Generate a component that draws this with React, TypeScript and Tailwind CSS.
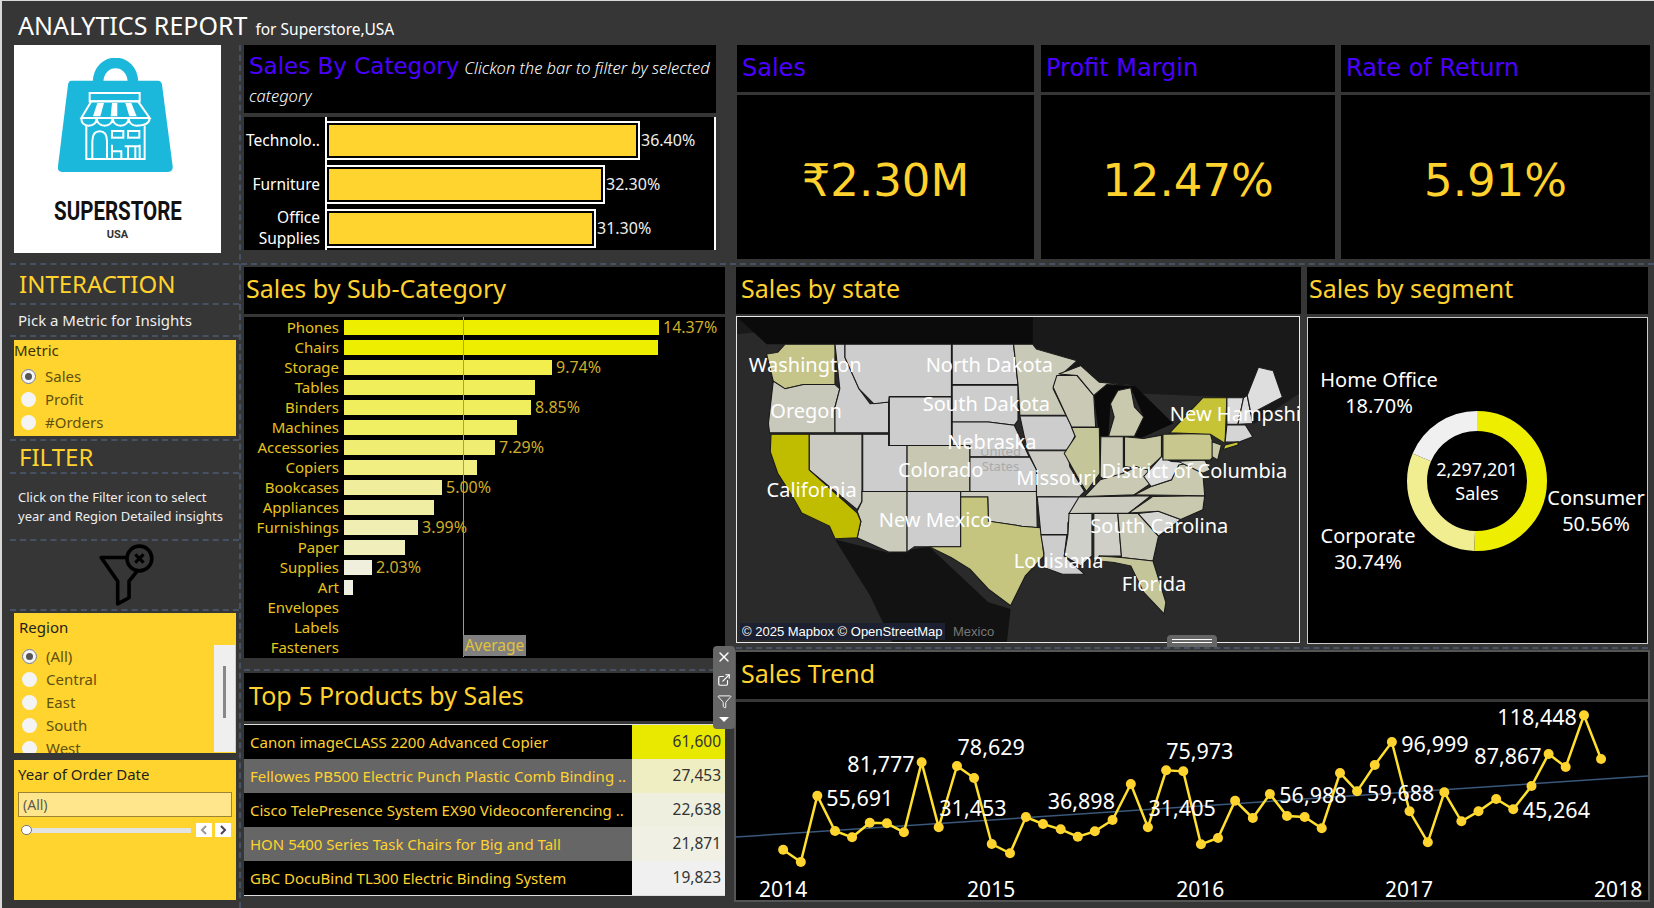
import { X, ExternalLink, Filter } from "lucide-react";

const subCategories = [
  { name: "Phones", width: 315, color: "#eeee00", value: "14.37%" },
  { name: "Chairs", width: 314, color: "#eeee00" },
  { name: "Storage", width: 208, color: "#f1ee4e", value: "9.74%" },
  { name: "Tables", width: 191, color: "#f0ee5a" },
  { name: "Binders", width: 187, color: "#f0ee5c", value: "8.85%" },
  { name: "Machines", width: 173, color: "#f0ee62" },
  { name: "Accessories", width: 151, color: "#f0ee72", value: "7.29%" },
  { name: "Copiers", width: 133, color: "#f1ee82" },
  { name: "Bookcases", width: 98, color: "#f0ee9c", value: "5.00%" },
  { name: "Appliances", width: 90, color: "#f0eea2" },
  { name: "Furnishings", width: 74, color: "#f0eeb2", value: "3.99%" },
  { name: "Paper", width: 61, color: "#f0eeba" },
  { name: "Supplies", width: 28, color: "#f0eedc", value: "2.03%" },
  { name: "Art", width: 9, color: "#f0f0e2" },
  { name: "Envelopes", width: 0, color: "" },
  { name: "Labels", width: 0, color: "" },
  { name: "Fasteners", width: 0, color: "" },
];

const products = [
  { name: "Canon imageCLASS 2200 Advanced Copier", value: "61,600", color: "#e9e900" },
  { name: "Fellowes PB500 Electric Punch Plastic Comb Binding ..", value: "27,453", color: "#efeec2" },
  { name: "Cisco TelePresence System EX90 Videoconferencing ..", value: "22,638", color: "#efefdf" },
  { name: "HON 5400 Series Task Chairs for Big and Tall", value: "21,871", color: "#f0f0e4" },
  { name: "GBC DocuBind TL300 Electric Binding System", value: "19,823", color: "#f0f0f0" },
];

const trend = [
  [90, 628], [120, 665], [148, 466], [178, 572], [207, 591], [237, 547], [266, 549], [295, 576],
  [325, 366], [354, 561], [385, 377], [414, 413], [444, 611], [475, 639], [502, 530], [531, 551],
  [561, 567], [590, 589], [619, 573], [649, 539], [680, 431], [709, 561], [740, 390], [769, 393],
  [799, 612], [828, 593], [857, 481], [887, 533], [916, 461], [945, 527], [975, 530], [1004, 564],
  [1035, 398], [1064, 453], [1094, 374], [1123, 305], [1153, 513], [1184, 606], [1212, 456], [1241, 543],
  [1270, 513], [1300, 476], [1329, 507], [1360, 437], [1389, 341], [1418, 380], [1449, 225], [1478, 356],
].map(([x, y]) => [(x - 10) / 1.697, (y - 185) / 3]);

const trendLabels = [
  ["55,691", 163, 472], ["81,777", 199, 371], ["78,629", 386, 320], ["31,453", 355, 502],
  ["36,898", 539, 481], ["75,973", 740, 332], ["31,405", 710, 502], ["56,988", 932, 464],
  ["59,688", 1081, 458], ["96,999", 1139, 311], ["87,867", 1263, 346], ["45,264", 1345, 510],
  ["118,448", 1302, 229],
] as [string, number, number][];

const years = [["2014", 90], ["2015", 443], ["2016", 798], ["2017", 1152], ["2018", 1507]] as [string, number][];

// state outlines, traced in the zoomed map's coordinates
const grey = "#cdcdcd";
const states: [string, string][] = [
  ["150,100 285,100 285,222 200,222 150,235 118,212 100,130 130,125", "#c5c58a"],
  ["118,212 150,235 200,222 285,222 298,235 285,290 285,368 108,368 105,340", "#c9c9bb"],
  ["215,372 358,372 358,575 345,600 215,480", "#cbcbc4"],
  ["285,100 312,100 312,140 350,235 380,280 430,275 430,368 285,368 285,290 298,235", grey],
  ["312,100 600,100 600,258 432,258 430,275 390,280 350,235 312,140", grey],
  ["432,260 600,260 600,406 432,406", grey],
  ["360,372 430,372 430,406 480,406 480,545 360,545", grey],
  ["480,406 650,406 650,545 480,545", "#c8c8b2"],
  ["358,545 480,545 480,728 430,728 345,685 355,635 345,605 358,575", "#cbcbbc"],
  ["480,545 625,545 625,712 500,712 480,728", grey],
  ["602,100 768,100 780,222 602,222", grey],
  ["602,224 780,224 780,330 770,345 700,335 602,335", grey],
  ["602,335 700,335 770,345 810,440 650,440 650,406 602,406", grey],
  ["650,442 812,442 830,480 830,545 650,545", grey],
  ["625,545 830,545 832,655 790,650 700,635 698,562 625,562", "#cbcbc0"],
  ["625,562 698,562 700,635 790,650 842,655 850,740 800,800 760,890 700,840 650,780 600,745 540,712 625,712", "#c5c57f"],
  ["768,100 820,100 830,115 940,150 885,205 875,235 910,315 785,315 780,222", "#c9c9b8"],
  ["785,317 912,317 935,375 915,420 805,420", grey],
  ["805,422 915,422 920,470 960,545 945,562 830,560 830,480", "#cbcbc4"],
  ["832,562 950,562 915,640 915,675 842,675", grey],
  ["842,677 912,677 905,740 960,795 900,795 850,775 850,730", "#cdcdcd"],
  ["875,230 885,195 940,195 985,255 990,350 925,350 910,315", "#c9c9b6"],
  ["925,352 1000,352 1002,490 965,545 945,510 905,430 935,380", "#c5c59a"],
  ["890,190 950,165 1000,215 1095,225 1020,222 985,255 940,195", "#c9c9b6"],
  ["1050,240 1085,232 1095,290 1120,320 1095,378 1025,378 1040,320 1030,280", "#c9c9ae"],
  ["1004,380 1065,380 1065,490 1020,515 1002,500", "#c9c9b6"],
  ["1068,380 1120,385 1168,375 1168,440 1130,480 1068,470", "#c8c8a4"],
  ["960,560 1002,510 1065,490 1100,470 1130,480 1140,520 1095,555", "#c9c9b4"],
  ["945,562 1140,558 1080,610 918,612", "#cbcbbf"],
  ["918,612 980,612 980,740 950,770 905,740 915,675", "#d0d0cb"],
  ["985,612 1050,612 1060,740 1000,740 985,770", "#cfcfc8"],
  ["1050,612 1105,612 1160,680 1145,755 1060,745", "#c9c9b8"],
  ["1000,740 1060,745 1145,755 1180,880 1175,915 1120,850 1085,770 1040,760 1000,755", "#c5c59a"],
  ["1105,612 1160,605 1220,630 1160,680", "#d4d4d0"],
  ["1080,610 1145,560 1285,558 1280,600 1220,630 1160,605", "#c9c9b0"],
  ["1095,555 1140,530 1195,510 1215,455 1280,490 1285,558", "#c9c9b0"],
  ["1120,500 1168,440 1195,455 1250,458 1215,465 1195,510 1140,530", "#dcdcdc"],
  ["1195,455 1285,450 1300,480 1280,490 1215,455", "#d2d2c2"],
  ["1172,372 1300,370 1315,430 1300,450 1172,450", "#c8c88e"],
  ["1305,395 1330,405 1320,450 1305,440", "#c9c9a8"],
  ["1190,368 1280,262 1345,262 1340,400 1300,372", "#c7c336"],
  ["1345,262 1390,262 1375,342 1345,342", "#dcdcdc"],
  ["1390,262 1400,255 1415,340 1375,342", "#dcdcdc"],
  ["1400,255 1430,170 1470,180 1495,260 1410,310", "#dedede"],
  ["1345,344 1395,344 1415,380 1380,395 1340,396", "#d5d5d5"],
  ["1340,405 1375,395 1375,405 1335,418", "#c7c336"],
  ["112,372 215,372 215,480 345,610 355,635 345,685 285,688 270,650 195,610 170,560 130,490 110,425", "#c0bc00"],
];

const mapLabels: [string, number, number][] = [
  ["Washington", 52, 162], ["North Dakota", 530, 162], ["South Dakota", 522, 280], ["Oregon", 110, 300],
  ["New Hampshi", 1190, 310], ["Nebraska", 588, 392], ["Colorado", 455, 478], ["Missouri", 775, 500],
  ["District of Columbia", 1005, 480], ["California", 100, 538], ["New Mexico", 403, 628],
  ["South Carolina", 975, 645], ["Louisiana", 768, 750], ["Florida", 1060, 820],
];

function Dash({ className = "" }: { className?: string }) {
  return <div className={"border-t-2 border-dashed border-[#465264] " + className} />;
}

function Radio({ label, checked }: { label: string; checked?: boolean }) {
  return (
    <div className="flex h-[23px] items-center gap-[9px] text-[15px] text-[#5f5012]">
      <span className="flex h-[15px] w-[15px] items-center justify-center rounded-full bg-[#f4f4f4]">
        {checked && (
          <span className="flex h-[15px] w-[15px] items-center justify-center rounded-full border border-[#777]">
            <span className="h-[7px] w-[7px] rounded-full bg-[#555]" />
          </span>
        )}
      </span>
      {label}
    </div>
  );
}

function Logo() {
  return (
    <div className="ml-3 flex h-[208px] w-[207px] flex-col items-center bg-white pt-[13px]">
      <svg width="160" height="115" viewBox="0 25 480 345">
        <path d="M180 100 C180 20 285 20 285 100" fill="none" stroke="#1bb8dc" strokeWidth="32" />
        <path d="M100 93 H360 Q370 93 372 105 L404 350 Q405 367 390 367 H72 Q58 367 60 350 L90 105 Q92 93 100 93Z" fill="#1bb8dc" />
        <g fill="none" stroke="#fff" strokeWidth="6">
          <rect x="155" y="130" width="150" height="25" />
          <path d="M160 155 L300 155 L335 205 L130 205 Z" />
          <path d="M130 205 Q130 228 152 228 Q175 228 176 205 Q178 228 200 228 Q222 228 224 205 Q226 228 248 228 Q270 228 272 205 Q274 228 295 228 Q335 228 335 205" />
          <path d="M145 228 V328 H320 V228" />
          <path d="M163 328 V275 Q163 245 185 245 Q207 245 207 275 V328" />
          <rect x="222" y="244" width="34" height="20" />
          <rect x="270" y="244" width="34" height="20" />
          <path d="M222 328 V285 M222 305 H250 V328 M260 290 H305 M270 290 V328 M292 290 V328 M305 285 V328" />
        </g>
        <g fill="#fff">
          <path d="M178 160 H198 L187 200 H165 Z" />
          <path d="M222 160 H238 L238 200 H218 Z" />
          <path d="M262 160 H280 L296 200 H274 Z" />
        </g>
      </svg>
      <div className="mt-[26px] scale-x-[.82] font-['Roboto',sans-serif] text-[25px] leading-[26px] font-bold whitespace-nowrap text-[#111]">
        SUPERSTORE
      </div>
      <div className="mt-[3px] font-['Roboto',sans-serif] text-[11px] leading-[14px] font-bold text-[#333]">USA</div>
    </div>
  );
}

function LeftColumn() {
  return (
    <div className="w-[239px] shrink-0 border-r-2 border-dashed border-[#465264]">
      <Logo />
      <Dash className="mt-[10px] ml-2" />
      <div className="ml-[17px] flex h-[38px] items-center text-[24px] text-[#ffd22e]">INTERACTION</div>
      <Dash className="ml-2" />
      <div className="ml-[16px] flex h-[30px] items-center text-[15px] text-[#eeeeee]">Pick a Metric for Insights</div>
      <Dash className="ml-2" />
      <div className="mt-[3px] ml-3 h-[96px] w-[222px] bg-[#ffd42e]">
        <div className="h-[21px] text-[15px] leading-[21px] text-[#3b3208]">Metric</div>
        <div className="mt-[4px] ml-[7px]">
          <Radio label="Sales" checked />
          <Radio label="Profit" />
          <Radio label="#Orders" />
        </div>
      </div>
      <Dash className="mt-[3px] ml-2" />
      <div className="ml-[17px] flex h-[31px] items-center text-[24px] text-[#ffd22e]">FILTER</div>
      <Dash className="ml-2" />
      <div className="ml-[16px] flex h-[65px] flex-col justify-center text-[13px] leading-[19px] text-[#eeeeee]">
        <div>Click on the Filter icon to select</div>
        <div>year and Region Detailed insights</div>
      </div>
      <Dash className="ml-2" />
      <div className="flex h-[68px] items-center justify-center pl-[12px]">
        <svg width="56" height="62" viewBox="0 0 54 60" fill="none" stroke="#000" strokeWidth="3.5" strokeLinejoin="round">
          <path d="M27 13 H2 L18 36 V58 L29 52 V36 L37 26" />
          <circle cx="39" cy="14" r="12" />
          <path d="M35 10 L43 18 M43 10 L35 18" strokeWidth="3" />
        </svg>
      </div>
      <Dash className="ml-2" />
      <div className="mt-[2px] ml-3 flex h-[140px] w-[222px] overflow-hidden bg-[#ffd42e]">
        <div className="flex-1 pt-[4px] pl-[5px]">
          <div className="h-[20px] text-[15px] leading-[20px] text-[#222]">Region</div>
          <div className="mt-[8px] ml-[3px]">
            <Radio label="(All)" checked />
            <Radio label="Central" />
            <Radio label="East" />
            <Radio label="South" />
            <Radio label="West" />
          </div>
        </div>
        <div className="mt-[32px] mr-[1px] h-[107px] w-[21px] bg-[#efefef] pt-[21px] pl-[9px]">
          <div className="h-[52px] w-[3px] bg-[#888]" />
        </div>
      </div>
      <div className="mt-[7px] ml-3 h-[140px] w-[222px] bg-[#ffd42e] px-1 pt-[4px]">
        <div className="h-[20px] text-[15px] leading-[20px] text-[#222]">Year of Order Date</div>
        <div className="mt-[8px] h-[25px] border border-[#9b8434] bg-[#ffe68c] pl-1 text-[14px] leading-[23px] text-[#5a5a5a]">(All)</div>
        <div className="mt-[6px] flex items-center">
          <div className="relative ml-[3px] h-[5px] w-[170px] bg-[#e3e3e3]">
            <div className="absolute top-[-3px] left-0 h-[10px] w-[11px] rounded-full border border-[#777] bg-white" />
          </div>
          <div className="ml-[5px] flex h-[14px] w-[16px] items-center justify-center bg-white text-[#999]">
            <svg width="8" height="10" viewBox="0 0 8 10" fill="none" stroke="currentColor" strokeWidth="2"><path d="M6 1 L2 5 L6 9" /></svg>
          </div>
          <div className="ml-[3px] flex h-[14px] w-[16px] items-center justify-center bg-white text-[#445]">
            <svg width="8" height="10" viewBox="0 0 8 10" fill="none" stroke="currentColor" strokeWidth="2"><path d="M2 1 L6 5 L2 9" /></svg>
          </div>
        </div>
      </div>
    </div>
  );
}

function KpiCard({ title, value, width, gap }: { title: string; value: string; width: string; gap: string }) {
  return (
    <div className={width + " " + gap + " shrink-0"}>
      <div className="flex h-[47px] items-center bg-black pb-[2px] pl-[5px] font-['DejaVu_Sans',sans-serif] text-[24px] text-[#4b00ff]">{title}</div>
      <div className="mt-[3px] flex h-[164px] items-center justify-center bg-black pt-[7px] font-['DejaVu_Sans',sans-serif] text-[45px] text-[#ffd22e]">{value}</div>
    </div>
  );
}

function CategoryBar({ label, width, value }: { label: string[]; width: string; value: string }) {
  return (
    <div className="flex h-[44px] items-center">
      <div className="w-[76px] pr-0 text-right text-[15.5px] leading-[21px] text-white">
        {label.map((l) => (
          <div key={l}>{l}</div>
        ))}
      </div>
      <div className="ml-[7px] flex items-center">
        <div className={width + " h-[35px] border-2 border-black bg-[#ffd42e] outline-2 outline-white"} />
        <span className="ml-[3px] text-[16px] text-[#eeeeee]">{value}</span>
      </div>
    </div>
  );
}

function SubCategoryChart() {
  return (
    <div className="relative mt-[3px] h-[341px] bg-black">
      {subCategories.map((s) => (
        <div key={s.name} className="flex h-[20px] items-center">
          <div className="w-[95px] text-right text-[15px] text-[#e8c41c]">{s.name}</div>
          <div className="ml-[5px] h-[15px]" style={{ width: s.width, backgroundColor: s.color }} />
          {s.value && <span className="ml-[4px] text-[16px] text-[#cfae2a]">{s.value}</span>}
        </div>
      ))}
      <div className="absolute top-0 left-[219px] h-[340px] w-px bg-[#b8a030]" />
      <div className="absolute bottom-[2px] left-[219px] flex h-[21px] w-[63px] items-center justify-center bg-[#808080] text-[15.5px] text-[#e0c23a]">Average</div>
    </div>
  );
}

function ProductTable() {
  return (
    <div className="mt-[3px] border-y border-[#dddddd]">
      {products.map((p, i) => (
        <div key={p.name} className={"flex h-[34px] items-center " + (i % 2 === 1 ? "bg-[#666666]" : "bg-black")}>
          <div className="w-[388px] pl-[6px] text-[15px] whitespace-nowrap text-[#ffd22e]">{p.name}</div>
          <div className="flex h-full flex-1 items-center justify-end pr-1 text-[15.5px] text-[#333]" style={{ backgroundColor: p.color }}>
            {p.value}
          </div>
        </div>
      ))}
    </div>
  );
}

function SalesMap() {
  return (
    <div className="relative mt-[2px] h-[327px] w-[564px] overflow-hidden border border-[#e8e8e8] bg-[#2a2a2a]">
      <svg width="100%" height="100%" viewBox="20 18 1520 982" preserveAspectRatio="none" className="block">
        <polygon points="20,18 1540,18 1540,250 1420,340 1340,260 1120,250 900,180 810,100 140,100 100,60 20,70" fill="#191919" />
        <polygon points="20,18 820,18 820,100 100,100" fill="#0b0b0b" />
        <polygon points="285,690 430,730 540,712 700,880 760,900 750,1000 440,1000 380,860" fill="#121212" />
        <polygon points="985,255 1020,222 1095,225 1200,340 1110,385 1095,378 1120,320 1085,232 1030,280 1025,378 1000,380" fill="#0a0a0a" />
        {states.map(([points, fill]) => (
          <polygon key={points} points={points} fill={fill} stroke="#1a1a1a" strokeWidth="3" />
        ))}
      </svg>
      <div className="absolute top-[127px] left-[243px] text-center text-[13px] leading-[15px] text-[#aaaaaa]">
        <div>United</div>
        <div>States</div>
      </div>
      {mapLabels.map(([text, x, y]) => (
        <div
          key={text}
          className="absolute -translate-y-1/2 text-[20px] leading-none whitespace-nowrap text-white"
          style={{ left: (x - 20) / 2.703, top: (y - 18) / 3 }}
        >
          {text}
        </div>
      ))}
      <div className="absolute bottom-[2px] left-[3px] bg-[#1c2030] px-[2px] font-['Liberation_Sans',sans-serif] text-[13px] leading-[17px] text-white">
        © 2025 Mapbox © OpenStreetMap
      </div>
      <div className="absolute bottom-[2px] left-[216px] font-['Liberation_Sans',sans-serif] text-[13px] leading-[17px] text-[#777777]">Mexico</div>
    </div>
  );
}

function SegmentDonut() {
  const r = 60;
  const c = 2 * Math.PI * r;
  const parts = [
    { share: 0.5056, color: "#eeee00" },
    { share: 0.3074, color: "#f0ee90" },
    { share: 0.187, color: "#f0f0f0" },
  ];
  let offset = 0;
  return (
    <div className="relative mt-[3px] h-[327px] border border-[#cccccc] bg-black text-[20px] leading-[26px] whitespace-nowrap text-white">
      <svg width="140" height="140" viewBox="0 0 140 140" className="absolute top-[93px] left-[99px] -rotate-90">
        {parts.map((p) => {
          const dash = p.share * c;
          const el = (
            <circle key={p.color} cx="70" cy="70" r={r} fill="none" stroke={p.color} strokeWidth="20" strokeDasharray={`${dash} ${c - dash}`} strokeDashoffset={-offset} />
          );
          offset += dash;
          return el;
        })}
      </svg>
      <div className="absolute top-[49px] left-[6px] w-[130px] text-center">Home Office<br />18.70%</div>
      <div className="absolute top-[205px] left-[12px] w-[96px] text-center">Corporate<br />30.74%</div>
      <div className="absolute top-[167px] left-[238px] w-[100px] text-center">Consumer<br />50.56%</div>
      <div className="absolute top-[139px] left-[109px] w-[120px] text-center text-[18px] leading-[24px]">2,297,201<br />Sales</div>
    </div>
  );
}

function TrendChart() {
  const line = trend.map(([x, y]) => `${x},${y}`).join(" ");
  return (
    <div className="mt-[3px] h-[198px] bg-black">
      <svg width="912" height="198" viewBox="0 0 912 198" className="block overflow-visible font-['Noto_Sans',sans-serif]">
        <line x1="0" y1="135" x2="912" y2="74" stroke="#39587a" strokeWidth="1.5" />
        <polyline points={line} fill="none" stroke="#ffe02e" strokeWidth="2.5" />
        {trend.map(([x, y]) => (
          <circle key={x} cx={x} cy={y} r="5" fill="#ffd42e" />
        ))}
        {trendLabels.map(([text, x, y]) => (
          <text key={text} x={(x - 10) / 1.697} y={(y - 185) / 3 + 8} fontSize="21.5" fill="#ffffff">{text}</text>
        ))}
        {years.map(([text, x]) => (
          <text key={text} x={(x - 10) / 1.697} y="195" fontSize="21" fill="#ffffff" textAnchor="middle">{text}</text>
        ))}
      </svg>
    </div>
  );
}

function Header({ title, className = "" }: { title: string; className?: string }) {
  return <div className={"flex items-center bg-black pb-[3px] text-[25px] text-[#ffd22e] " + className}>{title}</div>;
}

function PopupTools() {
  return (
    <div className="absolute top-[-25px] left-[469px] z-10 flex h-[83px] w-[22px] flex-col items-center justify-between rounded-sm bg-[#666666] py-[3px] text-white">
      <X size={16} strokeWidth={2} />
      <ExternalLink size={14} strokeWidth={2} />
      <Filter size={15} strokeWidth={1.5} />
      <span className="mb-[4px] h-0 w-0 border-x-[5px] border-t-[5px] border-x-transparent border-t-white" />
    </div>
  );
}

export default function App() {
  return (
    <div className="h-[908px] w-[1654px] overflow-hidden border-t border-l-2 border-[#d9d9d9] bg-[#363636] font-['Noto_Sans','Open_Sans',sans-serif]">
      <div className="flex h-[44px] items-baseline pt-[6px] pl-[16px] text-white">
        <span className="text-[25px]">ANALYTICS REPORT</span>
        <span className="ml-[8px] text-[15.5px]">for Superstore,USA</span>
      </div>
      <div className="flex h-[863px]">
        <LeftColumn />
        <div className="flex-1">
          <div className="flex h-[218px]">
            <div className="ml-[3px] w-[472px] shrink-0">
              <div className="h-[68px] bg-black pt-[8px] pl-[5px] leading-[27px]">
                <span className="font-['DejaVu_Sans',sans-serif] text-[23px] text-[#4b00ff]">Sales By Category</span>
                <span className="ml-[5px] text-[16.5px] font-light text-white italic">Clickon the bar to filter by selected category</span>
              </div>
              <div className="mt-[4px] h-[133px] border-r-2 border-white bg-black">
                <div className="relative pt-[1px]">
                  <div className="absolute top-0 left-[81px] h-[133px] w-[2px] bg-white" />
                  <CategoryBar label={["Technolo.."]} width="w-[311px]" value="36.40%" />
                  <CategoryBar label={["Furniture"]} width="w-[276px]" value="32.30%" />
                  <CategoryBar label={["Office", "Supplies"]} width="w-[267px]" value="31.30%" />
                </div>
              </div>
            </div>
            <KpiCard title="Sales" value="₹2.30M" width="w-[297px]" gap="ml-[21px]" />
            <KpiCard title="Profit Margin" value="12.47%" width="w-[294px]" gap="ml-[7px]" />
            <KpiCard title="Rate of Return" value="5.91%" width="w-[309px]" gap="ml-[6px]" />
          </div>
          <Dash />
          <div className="flex">
            <div className="relative ml-[3px] w-[481px] shrink-0">
              <Header title="Sales by Sub-Category" className="mt-[2px] h-[47px] pl-[2px]" />
              <SubCategoryChart />
              <Dash className="mt-[11px]" />
              <div className="relative">
                <PopupTools />
              </div>
              <Header title="Top 5 Products by Sales" className="mt-[2px] h-[48px] pl-[5px]" />
              <ProductTable />
            </div>
            <div className="ml-[11px] w-[912px] shrink-0">
              <div className="relative flex">
                <div className="w-[565px]">
                  <Header title="Sales by state" className="mt-[2px] h-[47px] pl-[5px]" />
                  <SalesMap />
                </div>
                <div className="ml-[6px] w-[341px]">
                  <Header title="Sales by segment" className="mt-[2px] h-[47px] pl-[2px]" />
                  <SegmentDonut />
                </div>
                <div className="absolute top-[370px] left-[431px] flex h-[12px] w-[50px] flex-col items-center justify-center gap-[2px] rounded-t-sm bg-[#666666]">
                  <span className="h-px w-[40px] bg-white" />
                  <span className="h-px w-[40px] bg-white" />
                </div>
              </div>
              <Dash className="mt-[3px]" />
              <div className="mt-[3px] outline-2 outline-[#555555]">
                <Header title="Sales Trend" className="h-[47px] pl-[5px]" />
                <TrendChart />
              </div>
            </div>
          </div>
        </div>
      </div>
    </div>
  );
}
